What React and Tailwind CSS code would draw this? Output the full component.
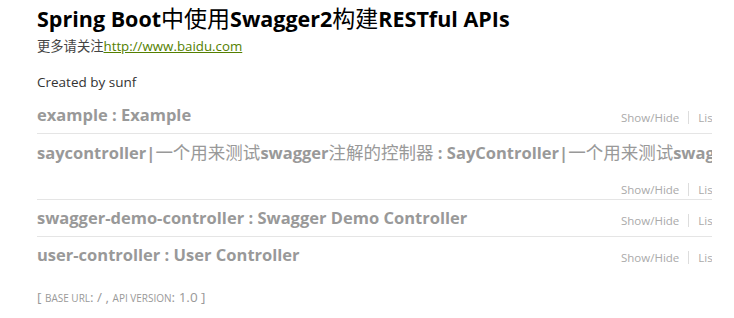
const FONT = { fontFamily: "'Open Sans', 'Noto Sans CJK SC', sans-serif" };

const ROWS = [
  { name: 'example', desc: 'Example' },
  {
    name: (
      <>
        saycontroller|<span className="font-normal text-[17.5px]">一个用来测试</span>swagger<span className="font-normal text-[17.5px]">注解的控制器</span>
      </>
    ),
    desc: (
      <>
        SayController|<span className="font-normal text-[17.5px]">一个用来测试</span>swagger<span className="font-normal text-[17.5px]">注解的控制器</span>
      </>
    ),
    wrap: true,
  },
  { name: 'swagger-demo-controller', desc: 'Swagger Demo Controller' },
  { name: 'user-controller', desc: 'User Controller', last: true },
];

function Ops({ wrap }) {
  return (
    <ul className={`flex items-center text-[11.5px] text-[#aaa] ${wrap ? 'ml-[584px] h-[29px] pt-[9px]' : 'h-[36px] pt-[4px]'}`}>
      <li className="pr-[9px] border-r border-[#ddd] leading-[13px]">Show/Hide</li>
      <li className="px-[9px] border-r border-[#ddd] leading-[13px]">List Operations</li>
      <li className="pl-[9px] leading-[13px]">Expand Operations</li>
    </ul>
  );
}

function Resource({ name, desc, wrap, last }) {
  return (
    <div className={`flex flex-wrap w-[900px] ${last ? '' : 'border-b border-[#e5e5e5]'}`}>
      <h2 className="min-w-[584px] h-[36px] leading-[36px] whitespace-nowrap text-[16.5px] font-bold text-[#999]">
        {name} : {desc}
      </h2>
      <Ops wrap={wrap} />
    </div>
  );
}

export default function App() {
  return (
    <div className="min-h-screen bg-white pl-[37px] pt-[4px]" style={FONT}>
      <h1 className="h-[28px] text-[21.5px] leading-[28px] font-bold text-black whitespace-nowrap">
        Spring Boot<span className="font-normal text-[23px]">中使用</span>Swagger2<span className="font-normal text-[23px]">构建</span>RESTful APIs
      </h1>
      <div className="mt-[5px] text-[13.3px] leading-[18px] text-[#444]">
        更多请关注
        <a href="#" className="text-[#547f00] underline">http://www.baidu.com</a>
      </div>
      <div className="mt-[18px] text-[13.5px] leading-[18px] text-[#333]">Created by sunf</div>

      <div className="mt-[6px] w-[675px] overflow-hidden">
        {ROWS.map((r, i) => (
          <Resource key={i} {...r} />
        ))}
      </div>

      <div className="mt-[16px] text-[13.5px] leading-[16px] text-[#999]">
        [ <span className="text-[10px]">BASE URL</span>: / , <span className="text-[10px]">API VERSION</span>: 1.0 ]
      </div>
    </div>
  );
}
